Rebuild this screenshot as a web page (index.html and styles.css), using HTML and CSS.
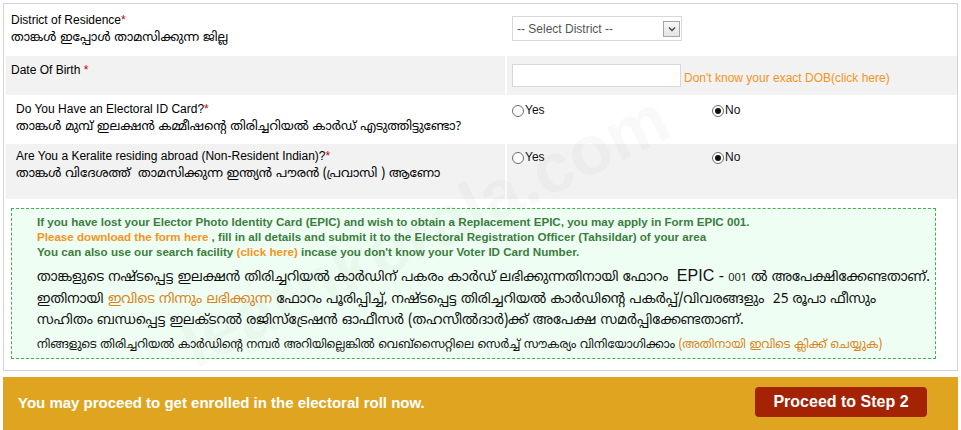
FILE: index.html
```html
<!DOCTYPE html>
<html lang="en">
<head>
    <meta charset="UTF-8">
    <title>Voter Registration - Step 1</title>
    <link rel="stylesheet" href="styles.css">
</head>
<body>

    <div class="panel">
        <div class="form-row">
            <div class="cell label-cell">
                <div class="label">District of Residence<span class="req">*</span></div>
                <div class="ml">താങ്കൾ ഇപ്പോൾ താമസിക്കുന്ന ജില്ല</div>
            </div>
            <div class="cell field-cell">
                <div class="select">
                    <span>-- Select District --</span>
                    <span class="select-arrow">
                        <svg width="8" height="6" viewBox="0 0 8 6"><path d="M1 1.5 L4 4.5 L7 1.5" fill="none" stroke="#4a4a4a" stroke-width="1.5"/></svg>
                    </span>
                </div>
            </div>
        </div>

        <div class="form-row shaded row-dob">
            <div class="cell label-cell">
                <div class="label">Date Of Birth <span class="req">*</span></div>
            </div>
            <div class="cell field-cell">
                <input type="text" class="text-input">
                <a href="#" class="dob-link">Don't know your exact DOB(click here)</a>
            </div>
        </div>

        <div class="form-row row-epic">
            <div class="cell label-cell indent">
                <div class="label">Do You Have an Electoral ID Card?<span class="req">*</span></div>
                <div class="ml">താങ്കൾ മുമ്പ് ഇലക്ഷൻ കമ്മീഷന്റെ തിരിച്ചറിയൽ കാർഡ് എടുത്തിട്ടുണ്ടോ?</div>
            </div>
            <div class="cell field-cell radios">
                <label class="radio"><span class="dot"></span>Yes</label>
                <label class="radio"><span class="dot checked"></span>No</label>
            </div>
        </div>

        <div class="form-row shaded row-nri">
            <div class="cell label-cell indent">
                <div class="label">Are You a Keralite residing abroad (Non-Resident Indian)?<span class="req">*</span></div>
                <div class="ml">താങ്കൾ വിദേശത്ത്&nbsp; താമസിക്കുന്ന ഇന്ത്യൻ പൗരൻ (പ്രവാസി ) ആണോ</div>
            </div>
            <div class="cell field-cell radios">
                <label class="radio"><span class="dot"></span>Yes</label>
                <label class="radio"><span class="dot checked"></span>No</label>
            </div>
        </div>

        <div class="notice">
            <p class="notice-en">
                If you have lost your Elector Photo Identity Card (EPIC) and wish to obtain a Replacement EPIC, you may apply in Form EPIC 001.<br>
                <a href="#" class="orange">Please download the form here</a> , fill in all details and submit it to the Electoral Registration Officer (Tahsildar) of your area<br>
                You can also use our search facility <a href="#" class="orange">(click here)</a> incase you don't know your Voter ID Card Number.
            </p>
            <p class="notice-ml">
                താങ്കളുടെ നഷ്ടപ്പെട്ട ഇലക്ഷൻ തിരിച്ചറിയൽ കാർഡിന് പകരം കാർഡ് ലഭിക്കുന്നതിനായി ഫോറം&nbsp; <span class="epic">EPIC -</span> <span class="small">001</span> ൽ അപേക്ഷിക്കേണ്ടതാണ്.<br>
                ഇതിനായി <a href="#" class="orange-ml">ഇവിടെ നിന്നും ലഭിക്കുന്ന</a> ഫോറം പൂരിപ്പിച്ച്, നഷ്ടപ്പെട്ട തിരിച്ചറിയൽ കാർഡിന്റെ പകർപ്പ്/വിവരങ്ങളും&nbsp; 25 രൂപാ ഫീസും<br>
                സഹിതം ബന്ധപ്പെട്ട ഇലക്ടറൽ രജിസ്ട്രേഷൻ ഓഫീസർ (തഹസീൽദാർ)ക്ക് അപേക്ഷ സമർപ്പിക്കേണ്ടതാണ്.
            </p>
            <p class="notice-search">
                നിങ്ങളുടെ തിരിച്ചറിയൽ കാർഡിന്റെ നമ്പർ അറിയില്ലെങ്കിൽ വെബ്സൈറ്റിലെ സെർച്ച് സൗകര്യം വിനിയോഗിക്കാം <a href="#" class="orange-ml">(അതിനായി ഇവിടെ ക്ലിക്ക് ചെയ്യുക)</a>
            </p>
        </div>

        <div class="watermark">learnkerala.com</div>
    </div>

    <div class="proceed-bar">
        <span class="proceed-text">You may proceed to get enrolled in the electoral roll now.</span>
        <a href="#" class="proceed-btn">Proceed to Step 2</a>
    </div>

</body>
</html>
```

FILE: styles.css
```css
body {
    margin: 0;
    font-family: "Liberation Sans", Arial, sans-serif;
    font-size: 12px;
    color: #000;
    background: #fff;
    overflow: hidden;
}
.panel {
    position: relative;
    margin: 3px 3px 0;
    padding: 1px 0 0 2px;
    border: 1px solid #d4d4d4;
}
.form-row {
    display: grid;
    grid-template-columns: 499px 1fr;
    column-gap: 2px;
    height: 49px;
    margin-bottom: 2px;
}
.form-row.shaded .cell {
    background: #f2f2f2;
}
.row-dob { height: 39px; }
.row-epic { height: 45px; }
.row-nri { height: 55px; }
.cell {
    padding: 8px 0 0 5px;
}
.label-cell.indent {
    padding: 5px 0 0 10px;
}
.row-dob .label-cell {
    padding-top: 7px;
}
.label {
    line-height: 15px;
}
.req {
    color: #c00;
}
.ml {
    font-family: "Noto Sans Malayalam", "Noto Sans", "DejaVu Sans", sans-serif;
    font-size: 12.5px;
    line-height: 20px;
    white-space: nowrap;
}
/* fake dropdown */
.field-cell {
    padding: 11px 0 0 5px;
}
.select {
    width: 164px;
    height: 23px;
    padding-left: 4px;
    border: 1px solid #d8d8d8;
    display: flex;
    align-items: center;
    justify-content: space-between;
    color: #555;
}
.select-arrow {
    width: 15px;
    height: 14px;
    margin-right: 1px;
    border: 1px solid #a6a6a6;
    background: linear-gradient(#f7f7f7, #e4e4e4);
    display: flex;
    align-items: center;
    justify-content: center;
}
.row-dob .field-cell {
    padding-top: 8px;
    display: flex;
    align-items: flex-start;
}
.text-input {
    width: 167px;
    height: 21px;
    margin: 0;
    padding: 0;
    border: 1px solid #d8d8d8;
    font: inherit;
}
.dob-link {
    color: #f7941d;
    text-decoration: none;
    margin: 7px 0 0 3px;
    line-height: 15px;
}
.radios {
    display: flex;
    align-items: flex-start;
    padding-top: 7px;
}
.radio {
    display: flex;
    align-items: center;
    width: 200px;
    height: 13px;
    line-height: 15px;
    color: #111;
}
.dot {
    width: 10px;
    height: 10px;
    border: 1px solid #6e6e6e;
    border-radius: 50%;
    background: #fff;
    margin-right: 1px;
    position: relative;
}
.dot.checked::after {
    content: "";
    position: absolute;
    left: 2px;
    top: 2px;
    width: 6px;
    height: 6px;
    border-radius: 50%;
    background: #111;
}
/* green info box */
.notice {
    margin: 9px 0 11px 5px;
    width: 925px;
    height: 151px;
    padding-left: 25px;
    box-sizing: border-box;
    border: 1px dashed #3cb54a;
    background: #effef3;
    white-space: nowrap;
}
.notice p {
    margin: 0;
}
.notice-en {
    padding-top: 5px;
    font-weight: bold;
    font-size: 11.6px;
    line-height: 15px;
    color: #3b7d3e;
}
.orange {
    color: #f7941d;
    text-decoration: none;
}
.notice-ml {
    margin-top: 6px !important;
    font-family: "Noto Sans Malayalam", "Noto Sans", "DejaVu Sans", sans-serif;
    font-size: 13.6px;
    line-height: 21px;
    color: #111;
}
.orange-ml {
    color: #d9831b;
    text-decoration: none;
}
.epic {
    font-family: "Liberation Sans", Arial, sans-serif;
    font-size: 16px;
}
.small {
    font-size: 11px;
}
.notice-search {
    margin-top: 5px !important;
    font-family: "Noto Sans Malayalam", "Noto Sans", "DejaVu Sans", sans-serif;
    font-size: 11.8px;
    line-height: 20px;
    color: #111;
}
/* faint site watermark over the form */
.watermark {
    position: absolute;
    left: 196px;
    top: 305px;
    height: 70px;
    font-size: 70px;
    line-height: 70px;
    font-weight: bold;
    color: rgba(0, 0, 0, 0.025);
    transform: rotate(-26deg);
    transform-origin: 0 100%;
    pointer-events: none;
    white-space: nowrap;
}
/* bottom bar */
.proceed-bar {
    margin: 6px 3px 0;
    height: 53px;
    padding: 10px 31px 0 15px;
    box-sizing: border-box;
    background: #e0a520;
    display: flex;
    justify-content: space-between;
    align-items: flex-start;
}
.proceed-text {
    margin-top: 7px;
    color: #fff;
    font-weight: bold;
    font-size: 15px;
}
.proceed-btn {
    width: 172px;
    height: 30px;
    line-height: 30px;
    text-align: center;
    background: #a32304;
    border-radius: 4px;
    color: #fff;
    font-weight: bold;
    font-size: 16px;
    text-decoration: none;
}
```
